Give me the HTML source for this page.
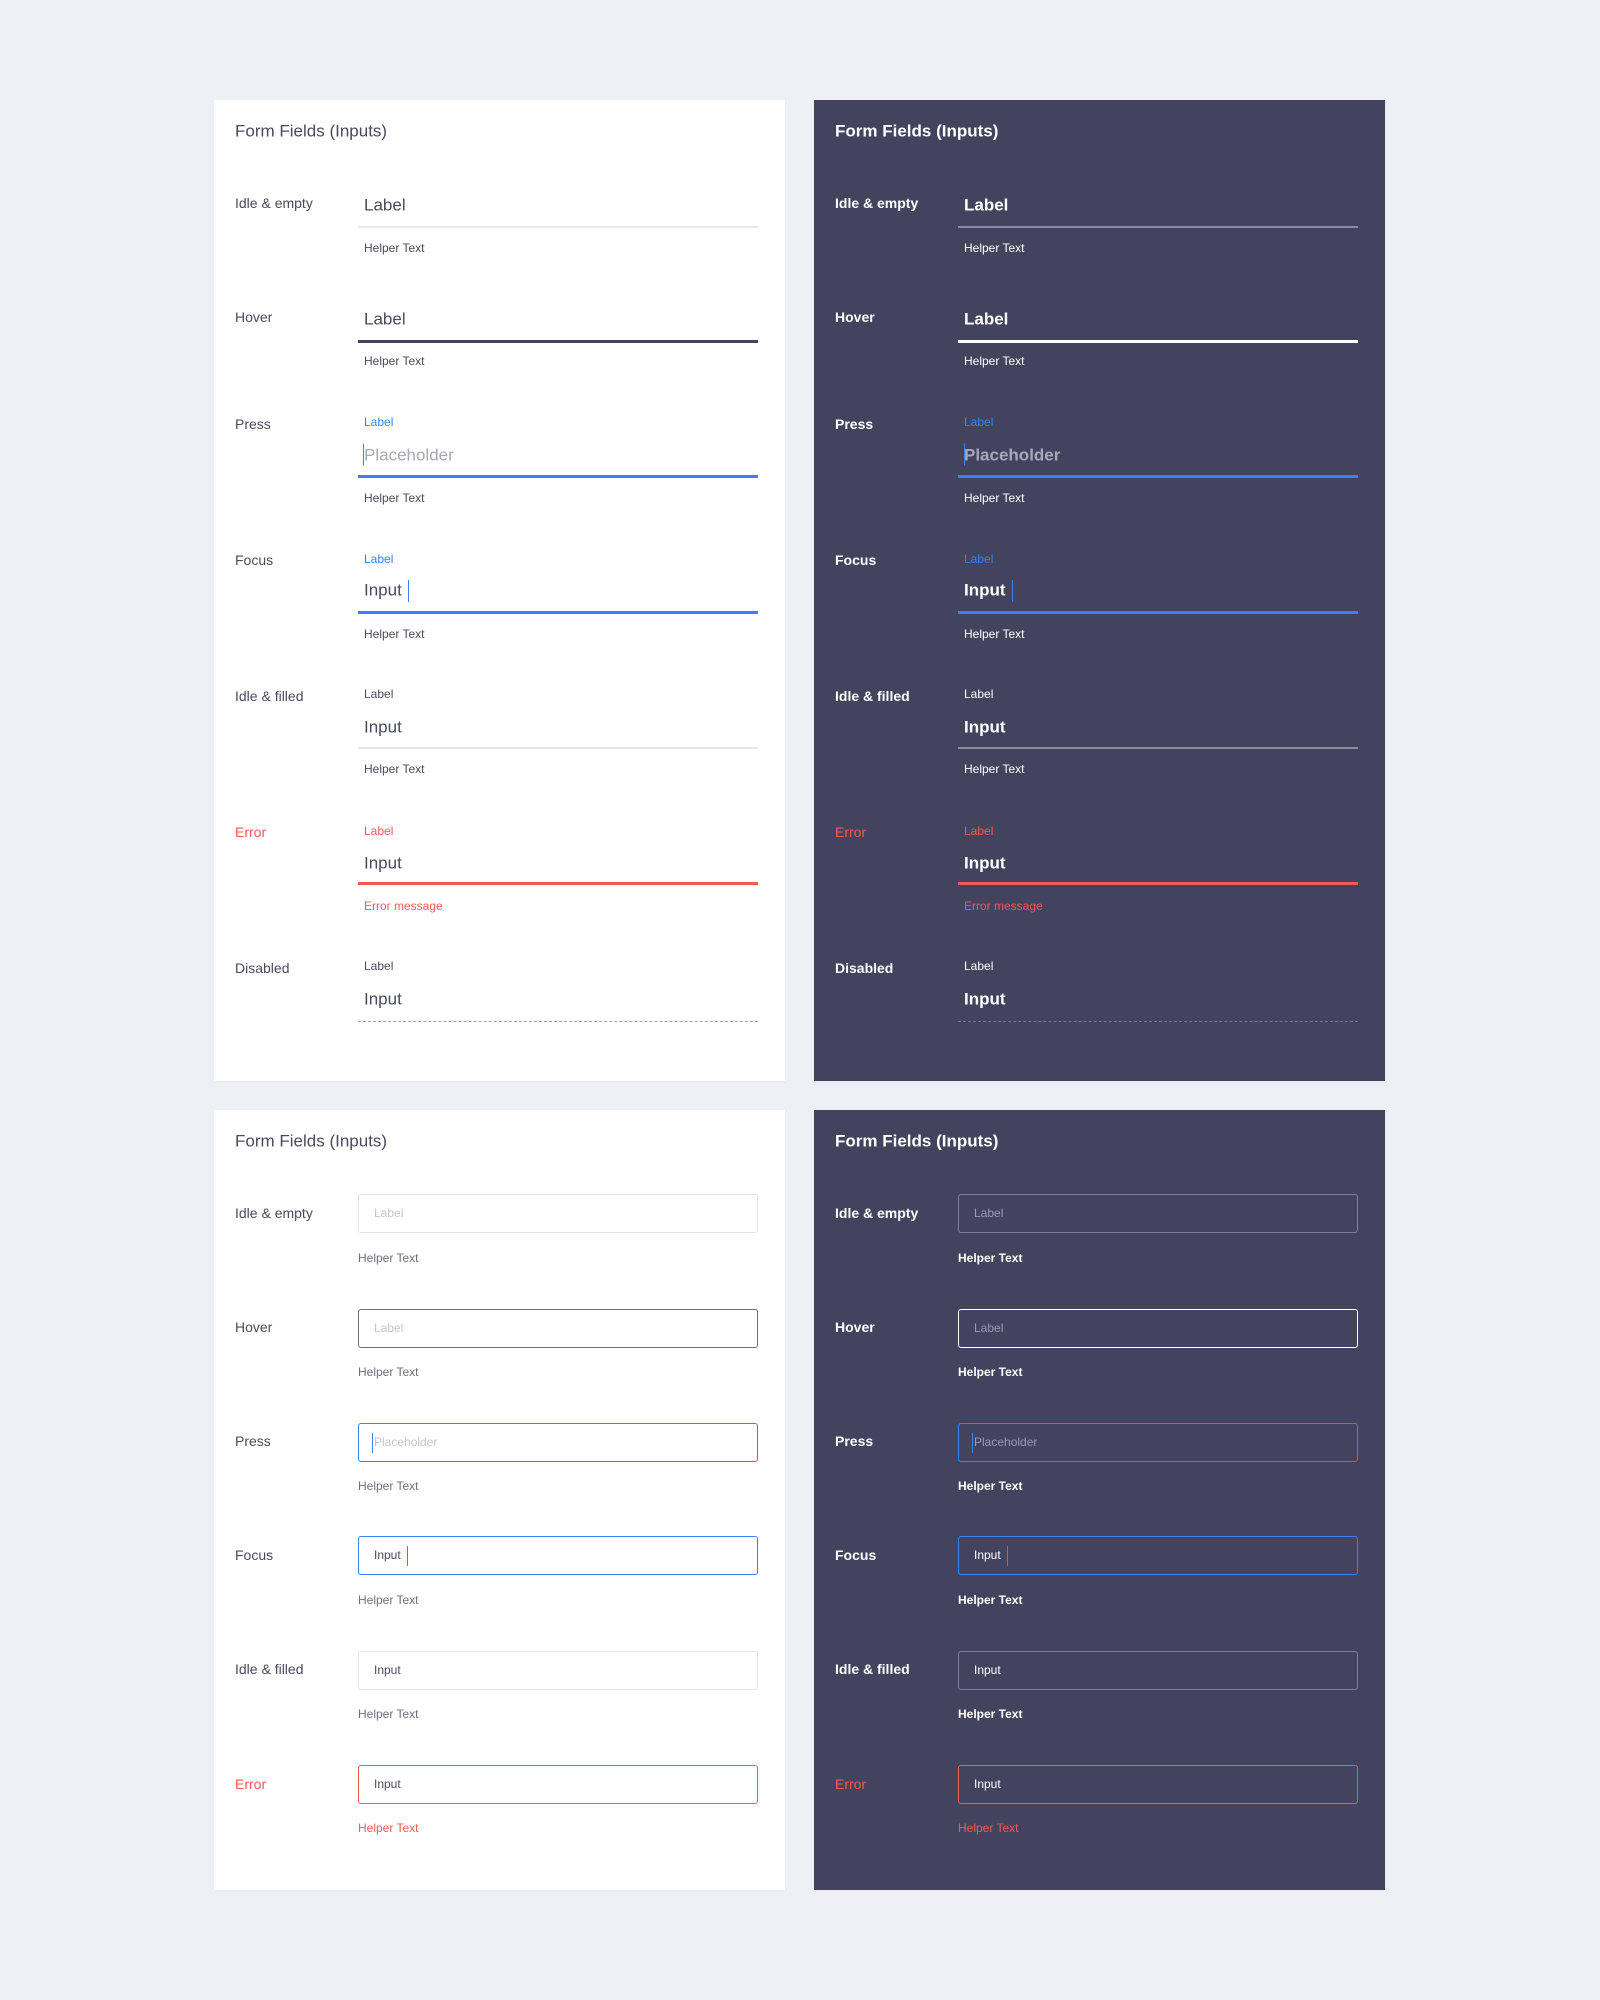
<!DOCTYPE html>
<html><head><meta charset="utf-8"><style>
*{margin:0;padding:0;box-sizing:border-box}
body{width:1600px;height:2000px;background:#eff0f5;font-family:"Liberation Sans",sans-serif;position:relative;overflow:hidden}
.c{position:absolute;width:571px;background:#fff;box-shadow:0 1px 3px rgba(0,0,0,.04)}
.d{background:#43435e}
.t{position:absolute;transform:translateY(-50%);white-space:nowrap;color:#4a4a5e;line-height:1}
.d .t{color:#fff}
.ti{left:21px;top:31px;font-size:17px}
.d .ti{font-weight:bold}
.rl{left:21px;font-size:14px}
.d .rl{font-weight:bold}
.big{left:150px;font-size:17px}
.ph{color:#a8a8b4!important}
.sm{left:150px;font-size:12px}
.hp{left:150px;font-size:12px}
.hb{left:144px;font-size:12px;color:#6e6e80}
.d .hb{color:#fff}
.blue{color:#3d80f0!important}
.red{color:#f25a5a!important}
.ln{position:absolute;left:144px;width:400px;height:2px;background:#e6e6ec}
.d .ln{background:#8a8aa0}
.lh{height:3px;background:#43435e}
.d .lh{background:#fff}
.lb{height:3px;background:#3d80f0!important}
.lr{height:3px;background:#f25a5a!important}
.ld{height:0;background:none!important;border-top:1px dashed #a0a0b0}
.d .ld{border-top-color:#77778e}
.cur{display:inline-block;width:1px;height:22px;background:#3d80f0;vertical-align:middle;margin-left:6px}
.bx{position:absolute;left:144px;width:400px;height:39px;border:1px solid #e4e4ea;border-radius:3px;font-size:12px;padding-left:15px;line-height:37px;color:#4a4a5e}
.d .bx{border-color:#80809a;color:#fff}
.bx .p{color:#c4c4cc}
.d .bx .p{color:#9a9ab0}
.bh{border-color:#6e6e82!important}
.d .bh{border-color:#fff!important}
.bb{border-color:#3d80f0!important}
.br{border-color:#f25a5a!important}
.cb{display:inline-block;width:1px;height:20px;background:#3d80f0;vertical-align:middle;margin-left:6px}
</style></head><body>

<!-- top light -->
<div class="c" style="left:214px;top:100px;height:981px">
<div class="t ti">Form Fields (Inputs)</div>
<div class="t rl" style="top:103px">Idle &amp; empty</div>
<div class="t big" style="top:105px">Label</div>
<div class="ln" style="top:126px"></div>
<div class="t hp" style="top:148px">Helper Text</div>
<div class="t rl" style="top:217px">Hover</div>
<div class="t big" style="top:219px">Label</div>
<div class="ln lh" style="top:240px"></div>
<div class="t hp" style="top:261px">Helper Text</div>
<div class="t rl" style="top:324px">Press</div>
<div class="t sm blue" style="top:322px">Label</div>
<div class="t big ph" style="top:355px"><span class="cur" style="margin:0 0 0 -1px;position:absolute;left:0;top:-3px"></span>Placeholder</div>
<div class="ln lb" style="top:375px"></div>
<div class="t hp" style="top:398px">Helper Text</div>
<div class="t rl" style="top:460px">Focus</div>
<div class="t sm blue" style="top:459px">Label</div>
<div class="t big" style="top:491px">Input<span class="cur"></span></div>
<div class="ln lb" style="top:511px"></div>
<div class="t hp" style="top:534px">Helper Text</div>
<div class="t rl" style="top:596px">Idle &amp; filled</div>
<div class="t sm" style="top:594px">Label</div>
<div class="t big" style="top:627px">Input</div>
<div class="ln" style="top:647px"></div>
<div class="t hp" style="top:669px">Helper Text</div>
<div class="t rl red" style="top:732px">Error</div>
<div class="t sm red" style="top:731px">Label</div>
<div class="t big" style="top:763px">Input</div>
<div class="ln lr" style="top:782px"></div>
<div class="t hp red" style="top:806px">Error message</div>
<div class="t rl" style="top:868px">Disabled</div>
<div class="t sm" style="top:866px">Label</div>
<div class="t big" style="top:899px">Input</div>
<div class="ln ld" style="top:921px"></div>
</div>

<!-- top dark -->
<div class="c d" style="left:814px;top:100px;height:981px">
<div class="t ti">Form Fields (Inputs)</div>
<div class="t rl" style="top:103px">Idle &amp; empty</div>
<div class="t big" style="top:105px;font-weight:bold">Label</div>
<div class="ln" style="top:126px"></div>
<div class="t hp" style="top:148px">Helper Text</div>
<div class="t rl" style="top:217px">Hover</div>
<div class="t big" style="top:219px;font-weight:bold">Label</div>
<div class="ln lh" style="top:240px"></div>
<div class="t hp" style="top:261px">Helper Text</div>
<div class="t rl" style="top:324px">Press</div>
<div class="t sm blue" style="top:322px">Label</div>
<div class="t big" style="top:355px;color:#a8a8bc;font-weight:bold"><span class="cur" style="margin:0;position:absolute;left:0;top:-3px"></span>Placeholder</div>
<div class="ln lb" style="top:375px"></div>
<div class="t hp" style="top:398px">Helper Text</div>
<div class="t rl" style="top:460px">Focus</div>
<div class="t sm blue" style="top:459px">Label</div>
<div class="t big" style="top:491px;font-weight:bold">Input<span class="cur"></span></div>
<div class="ln lb" style="top:511px"></div>
<div class="t hp" style="top:534px">Helper Text</div>
<div class="t rl" style="top:596px">Idle &amp; filled</div>
<div class="t sm" style="top:594px">Label</div>
<div class="t big" style="top:627px;font-weight:bold">Input</div>
<div class="ln" style="top:647px"></div>
<div class="t hp" style="top:669px">Helper Text</div>
<div class="t rl red" style="top:732px;font-weight:normal">Error</div>
<div class="t sm red" style="top:731px">Label</div>
<div class="t big" style="top:763px;font-weight:bold">Input</div>
<div class="ln lr" style="top:782px"></div>
<div class="t hp red" style="top:806px">Error message</div>
<div class="t rl" style="top:868px">Disabled</div>
<div class="t sm" style="top:866px">Label</div>
<div class="t big" style="top:899px;font-weight:bold">Input</div>
<div class="ln ld" style="top:921px"></div>
</div>

<!-- bottom light -->
<div class="c" style="left:214px;top:1110px;height:780px">
<div class="t ti">Form Fields (Inputs)</div>
<div class="t rl" style="top:103px">Idle &amp; empty</div>
<div class="bx" style="top:84px"><span class="p">Label</span></div>
<div class="t hb" style="top:148px">Helper Text</div>
<div class="t rl" style="top:217px">Hover</div>
<div class="bx bh" style="top:199px"><span class="p">Label</span></div>
<div class="t hb" style="top:262px">Helper Text</div>
<div class="t rl" style="top:331px">Press</div>
<div class="bx bb" style="top:313px;padding-left:13px"><span class="cb" style="margin:0 1px 0 0"></span><span class="p">Placeholder</span></div>
<div class="t hb" style="top:376px">Helper Text</div>
<div class="t rl" style="top:445px">Focus</div>
<div class="bx bb" style="top:426px">Input<span class="cb"></span></div>
<div class="t hb" style="top:490px">Helper Text</div>
<div class="t rl" style="top:559px">Idle &amp; filled</div>
<div class="bx" style="top:541px">Input</div>
<div class="t hb" style="top:604px">Helper Text</div>
<div class="t rl red" style="top:674px">Error</div>
<div class="bx br" style="top:655px">Input</div>
<div class="t hb red" style="top:718px">Helper Text</div>
</div>

<!-- bottom dark -->
<div class="c d" style="left:814px;top:1110px;height:780px">
<div class="t ti">Form Fields (Inputs)</div>
<div class="t rl" style="top:103px">Idle &amp; empty</div>
<div class="bx" style="top:84px"><span class="p">Label</span></div>
<div class="t hb" style="top:148px;font-weight:bold">Helper Text</div>
<div class="t rl" style="top:217px">Hover</div>
<div class="bx bh" style="top:199px"><span class="p">Label</span></div>
<div class="t hb" style="top:262px;font-weight:bold">Helper Text</div>
<div class="t rl" style="top:331px">Press</div>
<div class="bx bb" style="top:313px;padding-left:13px"><span class="cb" style="margin:0 1px 0 0"></span><span class="p">Placeholder</span></div>
<div class="t hb" style="top:376px;font-weight:bold">Helper Text</div>
<div class="t rl" style="top:445px">Focus</div>
<div class="bx bb" style="top:426px">Input<span class="cb"></span></div>
<div class="t hb" style="top:490px;font-weight:bold">Helper Text</div>
<div class="t rl" style="top:559px">Idle &amp; filled</div>
<div class="bx" style="top:541px">Input</div>
<div class="t hb" style="top:604px;font-weight:bold">Helper Text</div>
<div class="t rl red" style="top:674px;font-weight:normal">Error</div>
<div class="bx br" style="top:655px">Input</div>
<div class="t hb red" style="top:718px">Helper Text</div>
</div>
</body></html>
